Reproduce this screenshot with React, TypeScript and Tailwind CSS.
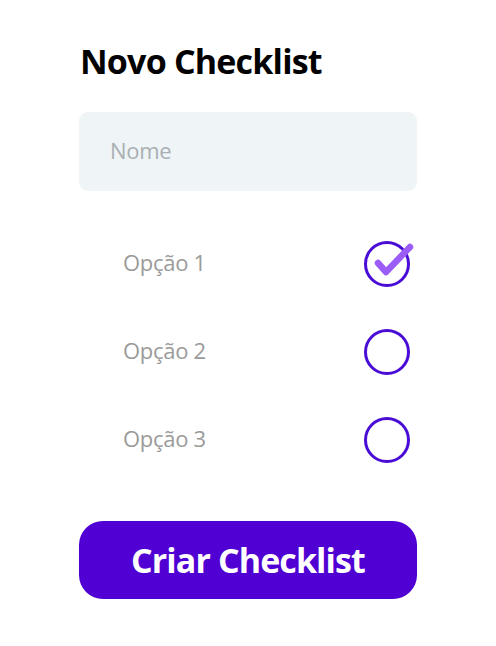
import React from "react";

const Circle = ({ checked }: { checked?: boolean }) => (
  <svg width="48" height="48" viewBox="0 0 48 48" className="overflow-visible">
    <circle cx="24" cy="24" r="21.5" fill="none" stroke="#4a0dd6" strokeWidth="3" />
    {checked && (
      <path d="M15 23 L23 32 L47 7" fill="none" stroke="#9b5cf7" strokeWidth="6.5" strokeLinecap="round" strokeLinejoin="round" />
    )}
  </svg>
);

export default function App() {
  const opts = ["Opção 1", "Opção 2", "Opção 3"];
  return (
    <div className="w-[496px] h-[646px] bg-white" style={{ fontFamily: '"Open Sans", "Noto Sans", sans-serif' }}>
      <div className="ml-[79px] w-[338px] pt-[41px]">
        <h1 className="pl-[1px] text-[34px] leading-[40px] font-bold text-black tracking-[-0.8px]">Novo Checklist</h1>
        <div className="mt-[31px] h-[79px] rounded-[9px] bg-[#eff4f7] flex items-center pl-[31px]">
          <span className="mb-[2px] text-[22px] text-[#a9afb3] tracking-[-0.3px]">Nome</span>
        </div>
        <div className="mt-[49px] flex flex-col gap-[40px]">
          {opts.map((o, i) => (
            <div key={o} className="flex items-center justify-between h-[48px] pl-[44px] pr-[6px]">
              <span className="mb-[3px] text-[22px] text-[#9a9a9a] tracking-[-0.3px]">{o}</span>
              <Circle checked={i === 0} />
            </div>
          ))}
        </div>
        <button className="mt-[57px] w-full h-[78px] rounded-[24px] bg-[#5000d3] text-white text-[34px] font-bold tracking-[-0.9px] flex items-center justify-center">
          Criar Checklist
        </button>
      </div>
    </div>
  );
}
